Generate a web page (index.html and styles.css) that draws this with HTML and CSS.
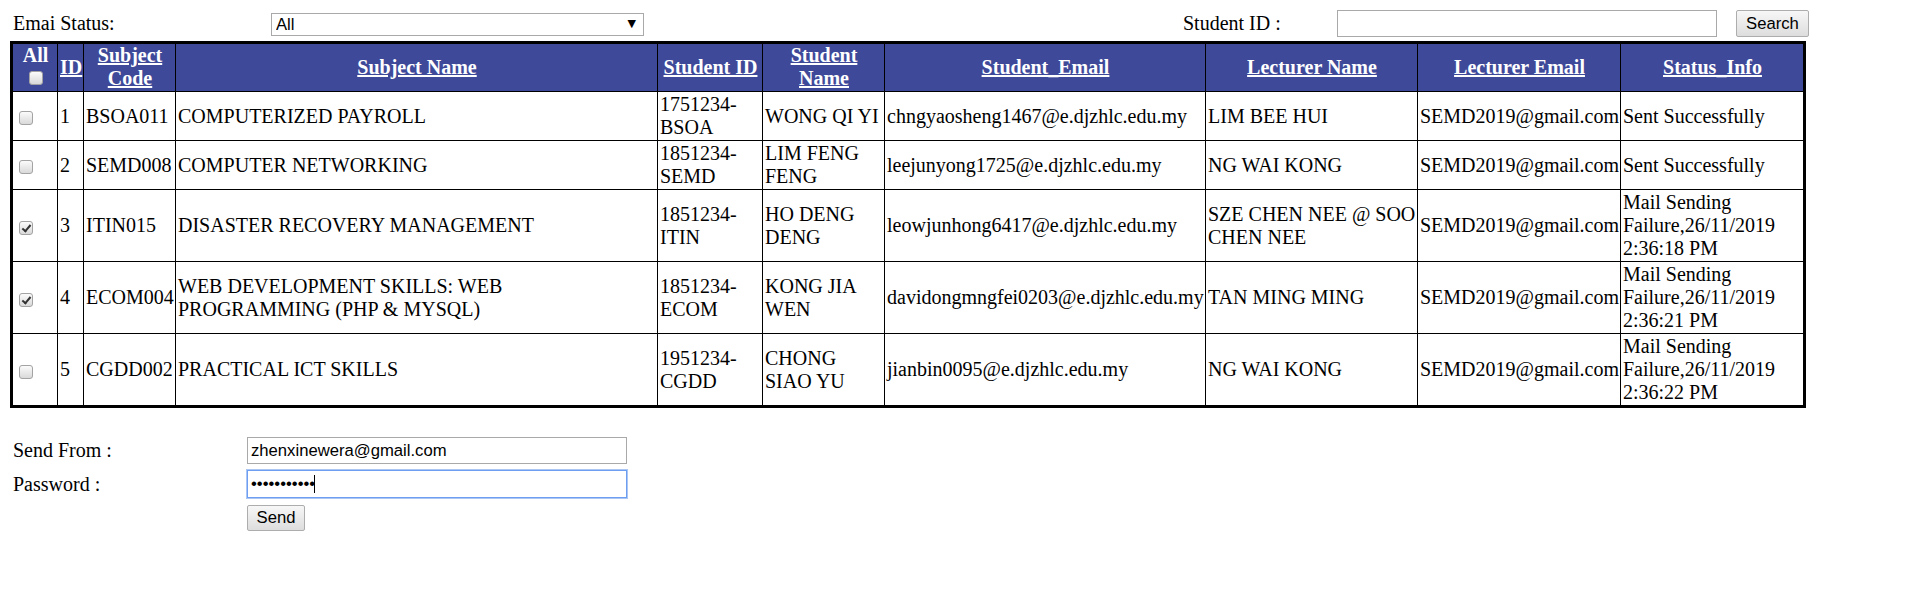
FILE: index.html
```html
<!DOCTYPE html>
<html>
<head>
<meta charset="utf-8">
<title>Email Status</title>
<link rel="stylesheet" href="styles.css">
</head>
<body>
<div class="toolbar">
  <label class="lbl-status">Emai Status:</label>
  <div class="select-wrap">
    <select class="status-select"><option>All</option><option>Sent Successfully</option><option>Mail Sending Failure</option></select>
    <span class="select-arrow">&#9660;</span>
  </div>
  <label class="lbl-student">Student ID :</label>
  <input type="text" class="txt search-input">
  <button class="btn search-btn">Search</button>
</div>

<table class="grid">
  <colgroup>
    <col class="c1"><col class="c2"><col class="c3"><col class="c4"><col class="c5">
    <col class="c6"><col class="c7"><col class="c8"><col class="c9"><col class="c10">
  </colgroup>
  <thead>
    <tr>
      <th>All<br><input type="checkbox" class="cb"></th>
      <th><a href="#">ID</a></th>
      <th><a href="#">Subject Code</a></th>
      <th><a href="#">Subject Name</a></th>
      <th><a href="#">Student ID</a></th>
      <th><a href="#">Student Name</a></th>
      <th><a href="#">Student_Email</a></th>
      <th><a href="#">Lecturer Name</a></th>
      <th><a href="#">Lecturer Email</a></th>
      <th><a href="#">Status_Info</a></th>
    </tr>
  </thead>
  <tbody>
    <tr>
      <td><input type="checkbox" class="cb"></td>
      <td>1</td><td>BSOA011</td><td>COMPUTERIZED PAYROLL</td><td>1751234-BSOA</td><td>WONG QI YI</td>
      <td>chngyaosheng1467@e.djzhlc.edu.my</td><td>LIM BEE HUI</td><td>SEMD2019@gmail.com</td><td>Sent Successfully</td>
    </tr>
    <tr>
      <td><input type="checkbox" class="cb"></td>
      <td>2</td><td>SEMD008</td><td>COMPUTER NETWORKING</td><td>1851234-SEMD</td><td>LIM FENG FENG</td>
      <td>leejunyong1725@e.djzhlc.edu.my</td><td>NG WAI KONG</td><td>SEMD2019@gmail.com</td><td>Sent Successfully</td>
    </tr>
    <tr>
      <td><input type="checkbox" class="cb" checked></td>
      <td>3</td><td>ITIN015</td><td>DISASTER RECOVERY MANAGEMENT</td><td>1851234-ITIN</td><td>HO DENG DENG</td>
      <td>leowjunhong6417@e.djzhlc.edu.my</td><td>SZE CHEN NEE @ SOO CHEN NEE</td><td>SEMD2019@gmail.com</td><td>Mail Sending Failure,26/11/2019 2:36:18 PM</td>
    </tr>
    <tr>
      <td><input type="checkbox" class="cb" checked></td>
      <td>4</td><td>ECOM004</td><td>WEB DEVELOPMENT SKILLS: WEB PROGRAMMING (PHP &amp; MYSQL)</td><td>1851234-ECOM</td><td>KONG JIA WEN</td>
      <td>davidongmngfei0203@e.djzhlc.edu.my</td><td>TAN MING MING</td><td>SEMD2019@gmail.com</td><td>Mail Sending Failure,26/11/2019 2:36:21 PM</td>
    </tr>
    <tr>
      <td><input type="checkbox" class="cb"></td>
      <td>5</td><td>CGDD002</td><td>PRACTICAL ICT SKILLS</td><td>1951234-CGDD</td><td>CHONG SIAO YU</td>
      <td>jianbin0095@e.djzhlc.edu.my</td><td>NG WAI KONG</td><td>SEMD2019@gmail.com</td><td>Mail Sending Failure,26/11/2019 2:36:22 PM</td>
    </tr>
  </tbody>
</table>

<div class="send-form">
  <label class="form-lbl">Send From :</label>
  <input type="text" class="txt form-input" value="zhenxinewera@gmail.com">
  <label class="form-lbl">Password :</label>
  <div class="pw-wrap">
    <input type="password" class="txt form-input pw-input" value="abcdefghijk">
    <span class="caret"></span>
  </div>
  <span></span>
  <div><button class="btn send-btn">Send</button></div>
</div>
</body>
</html>
```

FILE: styles.css
```css
html, body {
  margin: 0;
  padding: 0;
  background: #fff;
}
body {
  padding: 10px;
  font-family: "Liberation Serif", "Times New Roman", serif;
  font-size: 20px;
  line-height: 23px;
  color: #000;
}

.toolbar {
  display: flex;
  align-items: center;
  height: 27px;
}
.lbl-status {
  width: 258px;
  padding-left: 3px;
  flex: none;
}
.select-wrap {
  position: relative;
  width: 373px;
  height: 23px;
  flex: none;
}
.status-select {
  appearance: none;
  -webkit-appearance: none;
  width: 373px;
  height: 23px;
  margin: 0;
  box-sizing: border-box;
  border: 1px solid #a9a9a9;
  border-radius: 0;
  background: #fff;
  font-family: "Liberation Sans", Arial, sans-serif;
  font-size: 16.67px;
  padding: 0 4px;
  color: #000;
}
.select-arrow {
  position: absolute;
  right: 8px;
  top: 0;
  font-size: 11px;
  line-height: 23px;
  font-family: "DejaVu Sans", sans-serif;
  pointer-events: none;
}
.lbl-student {
  margin-left: 539px;
  width: 154px;
  flex: none;
}
.txt {
  box-sizing: border-box;
  border: 1px solid #a9a9a9;
  border-radius: 0;
  margin: 0;
  padding: 1px 3px;
  font-family: "Liberation Sans", Arial, sans-serif;
  font-size: 16.67px;
  color: #000;
  background: #fff;
  outline: none;
}
.search-input {
  width: 380px;
  height: 27px;
  flex: none;
}
.btn {
  box-sizing: border-box;
  margin: 0;
  border: 1px solid #adadad;
  border-radius: 2px;
  background: linear-gradient(#f7f7f7, #dddddd);
  font-family: "Liberation Sans", Arial, sans-serif;
  font-size: 16.67px;
  color: #000;
  padding: 0 6px;
}
.search-btn {
  margin-left: 19px;
  width: 73px;
  height: 27px;
  flex: none;
}

.grid {
  margin-top: 4px;
  border-collapse: collapse;
  table-layout: fixed;
  width: 1793px;
  border: 3px solid #000;
}
.c1 { width: 46px; }
.c2 { width: 26px; }
.c3 { width: 92px; }
.c4 { width: 482px; }
.c5 { width: 105px; }
.c6 { width: 122px; }
.c7 { width: 321px; }
.c8 { width: 212px; }
.c9 { width: 203px; }
.c10 { width: 184px; }

.grid th, .grid td {
  border: 1px solid #000;
  padding: 1px 1px 1px 2px;
  vertical-align: middle;
}
.grid th {
  background: #3e4999;
  color: #fff;
  font-weight: bold;
  text-align: center;
  padding-top: 0;
}
.grid th a {
  color: #fff;
  text-decoration: underline;
}
.grid td {
  text-align: left;
}

.cb {
  -webkit-appearance: none;
  appearance: none;
  box-sizing: border-box;
  width: 14px;
  height: 14px;
  margin: 3px 4px;
  border: 1px solid #a3a3a3;
  border-radius: 3px;
  background: linear-gradient(#fbfbfb, #d9d9d9);
  vertical-align: middle;
  position: relative;
}
.cb:checked::after {
  content: "";
  position: absolute;
  left: 4px;
  top: 1px;
  width: 3px;
  height: 7px;
  border: solid #333;
  border-width: 0 2px 2px 0;
  transform: rotate(40deg);
}
.grid th .cb {
  margin: 1px 0 5px;
}

.send-form {
  margin-top: 29px;
  display: grid;
  grid-template-columns: 237px 380px;
  row-gap: 6px;
  align-items: center;
}
.form-lbl {
  padding-left: 3px;
}
.form-input {
  width: 380px;
  height: 27px;
  display: block;
}
.pw-wrap {
  position: relative;
}
.pw-input {
  height: 28px;
  border: 1px solid #6d9ef0;
  box-shadow: 0 0 0 1px #a9c6f5;
}
.caret {
  position: absolute;
  left: 67px;
  top: 5px;
  width: 1px;
  height: 18px;
  background: #000;
}
.send-btn {
  margin-top: 1px;
  width: 58px;
  height: 26px;
}
```
